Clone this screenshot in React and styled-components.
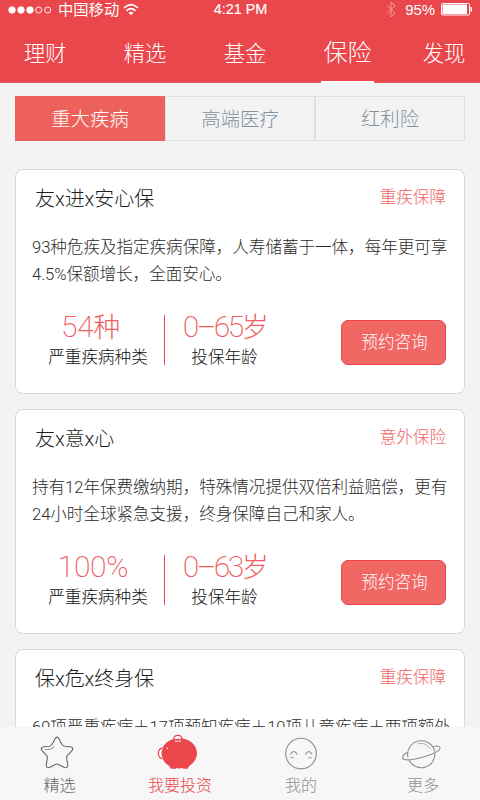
import React from 'react'
import styled, { createGlobalStyle } from 'styled-components'

const GlobalStyle = createGlobalStyle`
 * {
  box-sizing: border-box;
 }
 body {
  margin: 0;
  overflow: hidden;
  background: #f3f3f3;
  font-family: Roboto, "Noto Sans CJK SC", sans-serif;
  font-weight: 300;
 }
`
const Screen = styled.div`
 display: flex;
 flex-direction: column;
 width: 480px;
 height: 800px;
 overflow: hidden;
 background: #f3f3f3;
`
const Header = styled.header`
 flex: none;
 height: 83px;
 background: #e9474c;
 border-bottom: 1px solid #e75f66;
 color: white;
`
const StatusBar = styled.div`
 display: grid;
 grid-template-columns: 1fr 60px 1fr;
 align-items: center;
 height: 19px;
 padding: 0 7px 0 8px;
`
const StatusGroup = styled.div`
 display: flex;
 align-items: center;
 justify-content: ${props => props.end ? "flex-end" : "flex-start"};
 height: 19px;
`
const Carrier = styled.span`
 margin: 0 4px 0 6px;
 font-size: 15.3px;
 font-weight: 400;
 line-height: 19px;
 padding-top: 1px;
`
const Clock = styled.span`
 font-family: "Liberation Sans", sans-serif;
 font-size: 14.4px;
 font-weight: 400;
 line-height: 19px;
 text-align: center;
 white-space: nowrap;
 -webkit-text-stroke: 0.15px white;
`
const Percent = styled.span`
 margin: 0 6px 0 9px;
 font-family: "Liberation Sans", sans-serif;
 font-size: 15px;
 font-weight: 400;
 line-height: 19px;
 letter-spacing: -0.1px;
`
const Nav = styled.nav`
 display: grid;
 grid-template-columns: 90px 110px 90px 115px 75px;
 height: 64px;
`
const NavItem = styled.div`
 display: flex;
 justify-content: center;
 padding-left: ${props => props.shift || 0}px;
`
const NavLabel = styled.span`
 height: 64px;
 font-size: ${props => props.active ? "24px" : "21.3px"};
 line-height: ${props => props.active ? "68px" : "69px"};
 white-space: nowrap;
 ${props => props.active && "padding: 0 2.5px; border-bottom: 2px solid white;"}
`
const Content = styled.main`
 flex: 1;
 min-height: 0;
 overflow: hidden;
 padding: 13px 15px 0;
`
const Tabs = styled.div`
 display: grid;
 grid-template-columns: repeat(3, 150px);
 height: 45px;
 margin-bottom: 28px;
`
const Tab = styled.div`
 height: 45px;
 border: 1px solid ${props => props.active ? "#ec625a" : "#dedfe0"};
 background: ${props => props.active ? "#ec625a" : "transparent"};
 color: ${props => props.active ? "white" : "#82919b"};
 font-size: 19.4px;
 line-height: 45px;
 text-align: center;
`
const Card = styled.section`
 height: 225px;
 margin-bottom: 15px;
 border: 1px solid #d6d7d8;
 border-radius: 8px;
 background: white;
`
const CardHead = styled.div`
 display: flex;
 justify-content: space-between;
 height: 56px;
 padding: 0 18px 0 19px;
 line-height: 58px;
`
const Title = styled.h2`
 margin: 0;
 color: #1e1e1e;
 font-size: 20px;
 font-weight: 300;
 letter-spacing: -0.05px;
`
const Tag = styled.span`
 color: #f06365;
 font-size: 16.6px;
 line-height: 56px;
`
const Caption = styled.p`
 margin: 8px 0 0;
 padding-left: 16px;
 color: #2c2c2c;
 font-size: 16.6px;
 line-height: 27px;
 letter-spacing: -0.05px;
 white-space: nowrap;
`
const CardFoot = styled.div`
 display: flex;
 height: 60px;
 margin-top: 22px;
`
const Stat = styled.div`
 display: flex;
 flex-direction: column;
 align-items: center;
 width: ${props => props.wide ? "117px" : "119px"};
 margin-left: ${props => props.wide ? "31px" : 0};
 padding-right: ${props => props.wide ? "15px" : 0};
`
const StatValue = styled.div`
 height: 32px;
 margin-left: ${props => props.offset || 0}px;
 color: #ee5d5f;
 font-size: 30px;
 font-weight: 200;
 line-height: 33px;
 letter-spacing: ${props => props.tight ? "-2.5px" : "-0.3px"};
 white-space: nowrap;
`
const Unit = styled.span`
 font-size: 27px;
`
const StatLabel = styled.div`
 color: #111;
 font-size: 16.6px;
 line-height: 31px;
 white-space: nowrap;
`
const Divider = styled.div`
 width: 1px;
 height: 50px;
 margin-top: 5px;
 background: #e9474c;
`
const Button = styled.button`
 width: 105px;
 height: 45px;
 margin: 10px 18px 0 auto;
 padding: 1px 0 0 2px;
 border: 1px solid #e9474c;
 border-radius: 7px;
 background: #f16764;
 color: white;
 font: inherit;
 font-size: 16.6px;
 line-height: 42px;
`
const TabBar = styled.footer`
 display: grid;
 flex: none;
 grid-template-columns: 119px 122px 120px 119px;
 height: 73px;
 background: #f7f7f7;
`
const TabBarItem = styled.div`
 display: flex;
 flex-direction: column;
 align-items: center;
 padding: 6px 0 0 ${props => props.shift || 0}px;
 color: ${props => props.color};
 font-size: 16px;
 line-height: 25px;
`
const TabBarIcon = styled.svg`
 flex: none;
 width: 42px;
 height: 40px;
 overflow: visible;
 fill: none;
 stroke: currentColor;
 stroke-width: 1.1;
`

const nav = [
 { label: '理财' },
 { label: '精选' },
 { label: '基金' },
 { label: '保险', active: true },
 { label: '发现', shift: 3 },
]

const products = [
 {
  title: '友x进x安心保',
  tag: '重疾保障',
  lines: ['93种危疾及指定疾病保障，人寿储蓄于一体，每年更可享', '4.5%保额增长，全面安心。'],
  amount: '54',
  unit: '种',
  offset: -15,
  age: '0–65',
 },
 {
  title: '友x意x心',
  tag: '意外保险',
  lines: ['持有12年保费缴纳期，特殊情况提供双倍利益赔偿，更有', '24小时全球紧急支援，终身保障自己和家人。'],
  amount: '100%',
  offset: -10,
  age: '0–63',
 },
 {
  title: '保x危x终身保',
  tag: '重疾保障',
  lines: ['69项严重疾病＋17项预知疾病＋10项儿童疾病＋两项额外'],
 },
]

const Signal = () => (
 <svg width="44" height="10" viewBox="0 0 44 10" fill="white" stroke="white">
  <circle cx="4" cy="5" r="3.2" />
  <circle cx="13" cy="5" r="3.2" />
  <circle cx="22" cy="5" r="3.2" />
  <circle cx="30.7" cy="5" r="3" fill="none" strokeWidth="0.9" />
  <circle cx="39.7" cy="5" r="3" fill="none" strokeWidth="0.9" />
 </svg>
)
const Wifi = () => (
 <svg width="16" height="13" viewBox="0 0 16 13" fill="none" stroke="white" strokeWidth="1.7">
  <path d="M1 5Q8-1.7 15 5" />
  <path d="M3.5 7.8Q8 3.6 12.5 7.8" />
  <path d="M5.5 9.7Q8 7.6 10.5 9.7L8 12.2Z" fill="white" stroke="none" />
 </svg>
)
const Bluetooth = () => (
 <svg width="10" height="17" viewBox="0 0 10 17" fill="none" stroke="#f59a9c" strokeWidth="1">
  <path d="M1 4.5L9 12L5 16V1L9 5L1 12.5" />
 </svg>
)
const Battery = () => (
 <svg width="32" height="13" viewBox="0 0 32 13">
  <rect x="0.5" y="0.5" width="28" height="11.5" rx="1" fill="none" stroke="white" />
  <rect x="1.5" y="1.5" width="24.5" height="9.5" fill="white" />
  <path d="M30 4Q31.5 6.3 30 8.6Z" fill="white" stroke="white" />
 </svg>
)
const StarIcon = () => (
 <TabBarIcon viewBox="0 0 42 40">
  <path d="M15.9 6Q18 2.2 20.1 6Q21.6 9.3 23.3 11.8Q24 12.9 25.6 13.2L31.3 13.8Q35.3 14.7 32.8 17.9L28.5 22.4Q27.4 23.6 27.6 25L28.8 31.6Q28.9 35.8 25 34.3L19.7 31.5Q18 30.5 16.3 31.5L11 34.3Q7.1 35.8 7.2 31.6L8.4 25Q8.6 23.6 7.5 22.4L3.2 17.9Q.7 14.7 4.7 13.8L10.4 13.2Q12 12.9 12.7 11.8Q14.4 9.3 15.9 6Z" />
  <path d="M6 16.7L12 16Q14.3 15.5 15 13.2" strokeWidth="0.7" />
 </TabBarIcon>
)
const PigIcon = () => (
 <TabBarIcon viewBox="0 0 42 40">
  <path d="M14.7 6.4Q14.6 2.4 18.8 2.4Q23.1 2.4 22.9 6.4" strokeWidth="1.3" />
  <ellipse cx="20.2" cy="20.3" rx="17.8" ry="15.1" fill="currentColor" stroke="none" />
  <path d="M9 31L12 35.7H17L18 33H23L24 35.7H28.5L31.5 31Z" fill="currentColor" stroke="none" />
  <path d="M15.8 5.8Q18.8 4.6 21.8 5.8M15.8 8.2H22" stroke="#fff" strokeWidth="0.9" />
  <path d="M3.4 14.9Q-.6 16 -.6 20.3Q-.6 24.7 3.4 25.8" strokeWidth="1.3" />
  <path d="M3.1 15.9Q.5 17 .5 20.3Q.5 23.7 3.1 24.8Q1.7 22.8 1.7 20.3Q1.7 17.9 3.1 15.9Z" fill="#fff" stroke="#fff" strokeWidth="0.5" />
  <circle cx="8.3" cy="15.3" r="0.8" fill="#fff" stroke="none" />
 </TabBarIcon>
)
const FaceIcon = () => (
 <TabBarIcon viewBox="0 0 42 40">
  <circle cx="21" cy="20.6" r="15.3" />
  <path d="M10.4 21.5Q13.8 15.5 17.3 21.5M25.3 21.5Q28.8 15.5 32.2 21.5M10.5 24.7H13.5M28.5 24.7H31.5" />
 </TabBarIcon>
)
const PlanetIcon = () => (
 <TabBarIcon viewBox="0 0 42 40">
  <path d="M32.8 18.6A13.6 13.6 0 1 0 5.9 24.4M7.2 27.3A13.6 13.6 0 0 0 32.9 20.2" />
  <path d="M5.7 19.1Q1 21.8.7 24.4Q.6 28.2 12 26.2Q20.5 24.7 29.5 21.3Q38.6 17.5 38.1 14.6Q37.3 12.2 31.3 13.5" />
  <path d="M15.5 10.8Q24 8.6 28.6 16.4" strokeWidth="0.7" />
 </TabBarIcon>
)

const ProductCard = (props) => {
 return (
  <Card>
   <CardHead>
    <Title>{props.title}</Title>
    <Tag>{props.tag}</Tag>
   </CardHead>
   <Caption>
    {props.lines.map(line => <React.Fragment key={line}>{line}<br /></React.Fragment>)}
   </Caption>
   {props.amount && (
    <CardFoot>
     <Stat wide>
      <StatValue offset={props.offset}>{props.amount}{props.unit && <Unit>{props.unit}</Unit>}</StatValue>
      <StatLabel>严重疾病种类</StatLabel>
     </Stat>
     <Divider />
     <Stat>
      <StatValue tight>{props.age}<Unit>岁</Unit></StatValue>
      <StatLabel>投保年龄</StatLabel>
     </Stat>
     <Button>预约咨询</Button>
    </CardFoot>
   )}
  </Card>
 )
}

const App = () => {
 return (
  <Screen>
   <GlobalStyle />
   <Header>
    <StatusBar>
     <StatusGroup><Signal /><Carrier>中国移动</Carrier><Wifi /></StatusGroup>
     <Clock>4:21 PM</Clock>
     <StatusGroup end><Bluetooth /><Percent>95%</Percent><Battery /></StatusGroup>
    </StatusBar>
    <Nav>
     {nav.map(item => (
      <NavItem key={item.label} shift={item.shift}>
       <NavLabel active={item.active}>{item.label}</NavLabel>
      </NavItem>
     ))}
    </Nav>
   </Header>
   <Content>
    <Tabs>
     <Tab active>重大疾病</Tab>
     <Tab>高端医疗</Tab>
     <Tab>红利险</Tab>
    </Tabs>
    {products.map(product => <ProductCard key={product.title} {...product} />)}
   </Content>
   <TabBar>
    <TabBarItem color="#666"><StarIcon />精选</TabBarItem>
    <TabBarItem color="#e9474c"><PigIcon />我要投资</TabBarItem>
    <TabBarItem color="#8b8f91"><FaceIcon />我的</TabBarItem>
    <TabBarItem color="#8b8f91" shift={5}><PlanetIcon />更多</TabBarItem>
   </TabBar>
  </Screen>
 )
}
export default App
